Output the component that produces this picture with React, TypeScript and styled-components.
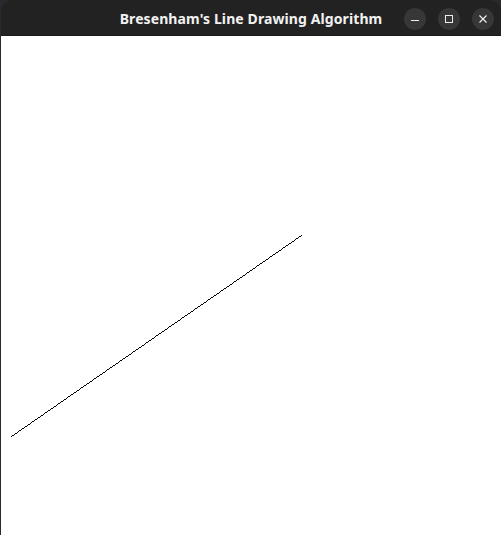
import React from "react";
import styled, { createGlobalStyle } from "styled-components";

const Global = createGlobalStyle`
  html, body { margin: 0; padding: 0; background: #2a2a2e; }
  body { width: 501px; height: 535px; overflow: hidden; }
  #root { height: 100%; }
`;

const Desktop = styled.div`
  display: flex;
  height: 535px;
  padding-left: 1px;
  box-sizing: border-box;
  background: #2a2a2e;
`;

const Window = styled.div`
  flex: 1;
  display: flex;
  flex-direction: column;
  border-radius: 12px 12px 0 0;
  overflow: hidden;
`;

const TitleBar = styled.div`
  height: 36px;
  flex: none;
  background: #222222;
  display: grid;
  grid-template-columns: 1fr auto 1fr;
  align-items: center;
  box-shadow: inset 0 -1px 0 #1a1a1a;
`;

const Title = styled.div`
  grid-column: 2;
  color: #f2f2f2;
  font-family: "Noto Sans", "DejaVu Sans", sans-serif;
  font-weight: 700;
  font-size: 14px;
  letter-spacing: 0.1px;
  padding-top: 1px;
  white-space: nowrap;
`;

const Controls = styled.div`
  grid-column: 3;
  justify-self: end;
  display: flex;
  gap: 12px;
  padding-right: 7px;
  padding-top: 2px;
`;

const CtrlButton = styled.div`
  width: 22px;
  height: 22px;
  border-radius: 50%;
  background: #373737;
  display: flex;
  align-items: center;
  justify-content: center;
`;

const Canvas = styled.div`
  flex: 1;
  background: #ffffff;
  position: relative;
`;

const Drawing = styled.svg`
  display: block;
  width: 100%;
  height: 100%;
`;

function bresenham(x0: number, y0: number, x1: number, y1: number) {
  const pts: [number, number][] = [];
  const dx = Math.abs(x1 - x0);
  const dy = -Math.abs(y1 - y0);
  const sx = x0 < x1 ? 1 : -1;
  const sy = y0 < y1 ? 1 : -1;
  let err = dx + dy;
  let x = x0;
  let y = y0;
  for (;;) {
    pts.push([x, y]);
    if (x === x1 && y === y1) break;
    const e2 = 2 * err;
    if (e2 >= dy) { err += dy; x += sx; }
    if (e2 <= dx) { err += dx; y += sy; }
  }
  return pts;
}

export default function App() {
  const pts = bresenham(10, 400, 300, 199);
  const d = pts.map(([x, y]) => `M${x} ${y}h1v1h-1z`).join("");
  return (
    <>
      <Global />
      <Desktop>
        <Window>
          <TitleBar>
            <Title>Bresenham's Line Drawing Algorithm</Title>
            <Controls>
              <CtrlButton>
                <svg width="10" height="10" viewBox="0 0 10 10">
                  <rect x="1" y="6" width="8" height="1" fill="#eeeeee" />
                </svg>
              </CtrlButton>
              <CtrlButton>
                <svg width="10" height="10" viewBox="0 0 10 10">
                  <rect x="1.5" y="1.5" width="7" height="7" fill="none" stroke="#eeeeee" strokeWidth="1" />
                </svg>
              </CtrlButton>
              <CtrlButton>
                <svg width="10" height="10" viewBox="0 0 10 10">
                  <path d="M1.5 1.5L8.5 8.5M8.5 1.5L1.5 8.5" stroke="#eeeeee" strokeWidth="1.2" />
                </svg>
              </CtrlButton>
            </Controls>
          </TitleBar>
          <Canvas>
            <Drawing shapeRendering="crispEdges">
              <path d={d} fill="#000000" />
            </Drawing>
          </Canvas>
        </Window>
      </Desktop>
    </>
  );
}
